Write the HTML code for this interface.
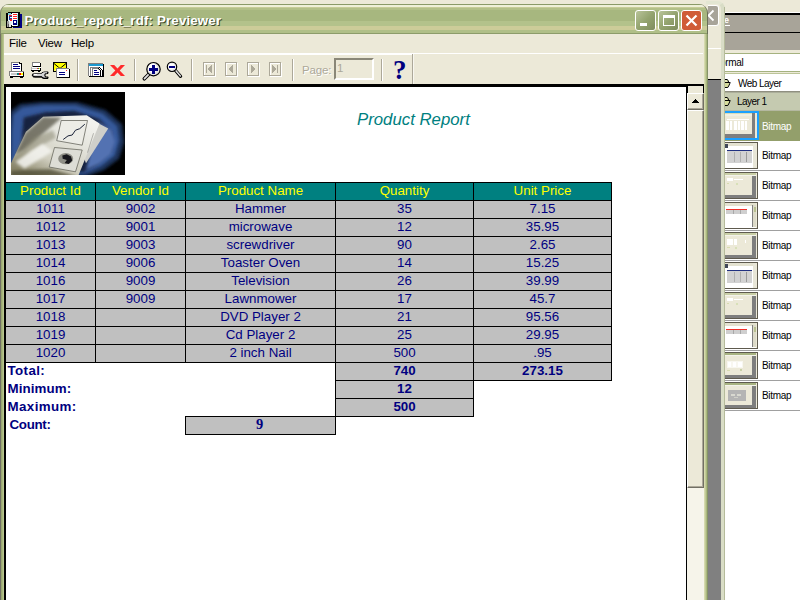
<!DOCTYPE html>
<html><head><meta charset="utf-8"><title>Product_report_rdf: Previewer</title>
<style>
*{box-sizing:border-box;margin:0;padding:0}
html,body{width:800px;height:600px;overflow:hidden;background:#ECE9D8;font-family:"Liberation Sans",sans-serif}
.a{position:absolute}
#stage{position:relative;width:800px;height:600px;overflow:hidden;background:#ECE9D8}
/* right panel (background app) */
#rp{left:725px;top:0;width:75px;height:600px;background:#fff}
#rp .t{position:absolute;font-size:10px;color:#000;white-space:nowrap;line-height:12px}
.bm{position:absolute;left:0;width:76px;height:30px;border-bottom:1px solid #A0A0A0;background:#fff}
.bm span{position:absolute;left:37px;top:9px;font-size:10px;letter-spacing:-0.3px;line-height:12px;color:#000}
.th{position:absolute;left:0;top:1px;width:33px;height:27px;background:#ECE9D8;border:1px solid #5E5A4E;border-left:none;overflow:hidden}
.th i{position:absolute;display:block}
/* main window */
#win{left:0;top:4px;width:708px;height:600px;background:#ECE9D8}
#tb{left:0;top:0;width:708px;height:30px;border-radius:9px 9px 0 0;border-right:1px solid #6B6F58;border-left:1px solid #7D8468;
background:linear-gradient(to bottom,#8A9A68 0,#8A9A68 1px,#EEF0D8 1px,#EEF0D8 3px,#C8CC98 3px,#C8CC98 4px,#B2C088 4px,#B2C088 6px,#A7B77F 6px,#A7B77F 17px,#B3C28B 17px,#B3C28B 22px,#CCCC99 22px,#CCCC99 26px,#B0BF88 26px,#B0BF88 29px,#8C9C6A 29px)}
#ttl{left:24.5px;top:9px;font-size:13.3px;font-weight:bold;color:#fff;white-space:nowrap;line-height:16px;text-shadow:1px 1px 0 #3E4A28;letter-spacing:0.16px}
.cb{position:absolute;top:6px;width:21px;height:21px;border:1px solid #fff;border-radius:3px;background:linear-gradient(135deg,#B9C49A 0,#94A46F 50%,#7F8C5E 100%)}
.menu{position:absolute;top:34px;font-size:11.5px;letter-spacing:-0.2px;line-height:14px;color:#000}
.sep{position:absolute;top:5px;width:2px;height:22px;border-left:1px solid #ACA899;border-right:1px solid #fff}
.nb{position:absolute;top:8px;width:12px;height:14px;border:1px solid #ACA899;box-shadow:1px 1px 0 #fff}
/* report */
#rep{left:6px;top:87px;width:680px;height:516px;background:#fff;overflow:hidden}
table{border-collapse:collapse;position:absolute;left:-1px;top:95px;font-size:13.33px;color:#000080;table-layout:fixed}
td,th{border:1px solid #000;height:18px;text-align:center;background:#C0C0C0;font-weight:normal;padding:0;line-height:15px;vertical-align:top;white-space:nowrap}
th{background:#008080;color:#FFFF00}
td.n{border:none;background:#fff}
td.b{font-weight:bold}
td.l{border:none;background:#fff;text-align:left;font-weight:bold;padding-left:2px;letter-spacing:0.4px}
</style></head><body>
<div id="stage">

<!-- background app right panel -->
<div class="a" id="rp">
  <div class="a" style="left:0;top:12px;width:76px;height:1px;background:#fff"></div>
  <div class="a" style="left:0;top:13px;width:76px;height:37px;background:#A8A499"></div>
  <div class="a" style="left:0;top:13px;width:76px;height:2px;background:#000"></div>
  <div class="a" style="left:0;top:32px;width:76px;height:1px;background:#000"></div>
  <div class="a" style="left:0;top:0;width:76px;height:12px;background:#ECE9D8"></div>
  <div class="t" style="left:-1px;top:14px;color:#fff;font-size:9px;font-weight:bold;line-height:13px">e</div><div class="a" style="left:0;top:25px;width:5px;height:1px;background:#fff"></div>
  <div class="a" style="left:0;top:50px;width:76px;height:24px;background:#ECE9D8"></div>
  <div class="a" style="left:0;top:53px;width:76px;height:19px;background:#fff;border-top:1px solid #A5B27F;border-bottom:1px solid #A5B27F"></div>
  <div class="a" style="left:0;top:73px;width:76px;height:1px;background:#BCC598"></div><div class="t" style="left:-5px;top:57px;letter-spacing:-0.3px">ormal</div>
  <div class="a" style="left:0;top:91px;width:76px;height:1px;background:#8F8F80"></div><div class="a" style="left:0;top:92px;width:76px;height:1px;background:#ABAE9A"></div>
  <div class="t" style="left:13px;top:78px;letter-spacing:-0.55px">Web Layer</div>
  <div class="a" style="left:0;top:93px;width:76px;height:18px;background:#C5CAB0"></div>
  <div class="t" style="left:12px;top:96px;letter-spacing:-0.55px">Layer 1</div>
  <!--EYE--><svg class="a" style="left:0;top:79px" width="7" height="10" viewBox="0 0 7 10"><path d="M0 0.5 L2 0.5 Q3.4 1 3.4 3.2 L4.6 3.4 L3.8 6 L2.6 8.4 L0 8.4 Z" fill="#D6DC9C"/><path d="M0 1.5 L2.4 1.5 L2.4 2.6 L0 2.6 Z" fill="#F0F0C8"/><path d="M0 0.5 L2 0.5 Q3.5 1 3.5 3 M0 3.5 L5.2 3.5 L4.2 6 L2.8 8.5 L0 8.5" stroke="#000" stroke-width="1" fill="none"/></svg><svg class="a" style="left:0;top:97px" width="7" height="10" viewBox="0 0 7 10"><path d="M0 0.5 L2 0.5 Q3.4 1 3.4 3.2 L4.6 3.4 L3.8 6 L2.6 8.4 L0 8.4 Z" fill="#D6DC9C"/><path d="M0 1.5 L2.4 1.5 L2.4 2.6 L0 2.6 Z" fill="#F0F0C8"/><path d="M0 0.5 L2 0.5 Q3.5 1 3.5 3 M0 3.5 L5.2 3.5 L4.2 6 L2.8 8.5 L0 8.5" stroke="#000" stroke-width="1" fill="none"/></svg><!--/EYE-->
  <!--TH-->
  <div class="bm" style="top:110px;background:#939F6B;height:31px;border-bottom:none;border-top:1px solid #B4B8A0"><div class="th" style="left:0;top:0;width:34px;height:29px;border:2px solid #1AA0FF;border-left:none;background:#ECE9D8"><i style="left:0px;top:0px;width:30px;height:1px;background:#D8DCB8"></i><i style="left:0px;top:1px;width:30px;height:2px;background:#F0EFE2"></i><i style="left:27px;top:0px;width:3px;height:25px;background:#7E7E7E"></i><i style="left:0px;top:21px;width:30px;height:4px;background:#7E7E7E"></i><i style="left:1px;top:8px;width:3px;height:9px;background:#fff"></i><i style="left:5px;top:8px;width:2px;height:9px;background:#fff"></i><i style="left:9px;top:8px;width:3px;height:9px;background:#fff"></i><i style="left:13px;top:8px;width:2px;height:9px;background:#fff"></i><i style="left:16px;top:8px;width:3px;height:9px;background:#fff"></i><i style="left:20px;top:8px;width:2px;height:9px;background:#fff"></i><i style="left:2px;top:6px;width:22px;height:1px;background:#fff"></i></div><span style="color:#fff;top:10px">Bitmap</span></div>
  <div class="bm" style="top:141px"><div class="th"><i style="left:0px;top:0px;width:31px;height:26px;background:#fff"></i><i style="left:0px;top:0px;width:31px;height:3px;background:#E4E2D0"></i><i style="left:0px;top:1px;width:3px;height:4px;background:#404858"></i><i style="left:2px;top:7px;width:25px;height:1px;background:#203080"></i><i style="left:2px;top:8px;width:25px;height:12px;background:#D2D2D2"></i><i style="left:9px;top:9px;width:1px;height:10px;background:#B0B0B0"></i><i style="left:15px;top:9px;width:1px;height:10px;background:#B0B0B0"></i><i style="left:21px;top:9px;width:1px;height:10px;background:#9A9A9A"></i><i style="left:28px;top:0px;width:3px;height:26px;background:#E8E6D8"></i></div><span>Bitmap</span></div>
  <div class="bm" style="top:171px"><div class="th"><i style="left:0px;top:0px;width:31px;height:2px;background:#C9CFA6"></i><i style="left:0px;top:2px;width:31px;height:1px;background:#F4F3EA"></i><i style="left:27px;top:3px;width:4px;height:23px;background:#7E7E7E"></i><i style="left:0px;top:22px;width:31px;height:4px;background:#7E7E7E"></i><i style="left:2px;top:5px;width:6px;height:3px;background:#fff"></i><i style="left:9px;top:6px;width:9px;height:1px;background:#fff"></i><i style="left:2px;top:10px;width:2px;height:1px;background:#D8DCB0"></i><i style="left:11px;top:10px;width:2px;height:2px;background:#D8E0B8"></i></div><span>Bitmap</span></div>
  <div class="bm" style="top:201px"><div class="th"><i style="left:0px;top:0px;width:31px;height:26px;background:#fff"></i><i style="left:0px;top:0px;width:31px;height:3px;background:#E4E2D0"></i><i style="left:1px;top:6px;width:21px;height:1px;background:#F03028"></i><i style="left:1px;top:7px;width:21px;height:4px;background:#CFCFCF"></i><i style="left:8px;top:7px;width:1px;height:4px;background:#A8A8A8"></i><i style="left:15px;top:7px;width:1px;height:4px;background:#A8A8A8"></i><i style="left:27px;top:2px;width:1px;height:22px;background:#808080"></i><i style="left:28px;top:2px;width:3px;height:22px;background:#DCDAC8"></i><i style="left:29px;top:4px;width:2px;height:5px;background:#B8C090"></i></div><span>Bitmap</span></div>
  <div class="bm" style="top:231px"><div class="th"><i style="left:0px;top:0px;width:31px;height:2px;background:#C9CFA6"></i><i style="left:0px;top:2px;width:31px;height:1px;background:#F4F3EA"></i><i style="left:27px;top:3px;width:4px;height:23px;background:#7E7E7E"></i><i style="left:0px;top:22px;width:31px;height:4px;background:#7E7E7E"></i><i style="left:2px;top:6px;width:6px;height:6px;background:#fff"></i><i style="left:9px;top:6px;width:3px;height:6px;background:#fff"></i><i style="left:20px;top:7px;width:1px;height:3px;background:#fff"></i><i style="left:2px;top:14px;width:3px;height:1px;background:#D8DCB0"></i><i style="left:10px;top:14px;width:2px;height:2px;background:#D8E0B8"></i></div><span>Bitmap</span></div>
  <div class="bm" style="top:261px"><div class="th"><i style="left:0px;top:0px;width:31px;height:26px;background:#fff"></i><i style="left:0px;top:0px;width:31px;height:3px;background:#E4E2D0"></i><i style="left:0px;top:1px;width:3px;height:4px;background:#404858"></i><i style="left:2px;top:7px;width:25px;height:1px;background:#203080"></i><i style="left:2px;top:8px;width:25px;height:12px;background:#D2D2D2"></i><i style="left:9px;top:9px;width:1px;height:10px;background:#B0B0B0"></i><i style="left:15px;top:9px;width:1px;height:10px;background:#B0B0B0"></i><i style="left:21px;top:9px;width:1px;height:10px;background:#9A9A9A"></i><i style="left:28px;top:0px;width:3px;height:26px;background:#E8E6D8"></i></div><span>Bitmap</span></div>
  <div class="bm" style="top:291px"><div class="th"><i style="left:0px;top:0px;width:31px;height:2px;background:#C9CFA6"></i><i style="left:0px;top:2px;width:31px;height:1px;background:#F4F3EA"></i><i style="left:27px;top:3px;width:4px;height:23px;background:#7E7E7E"></i><i style="left:0px;top:22px;width:31px;height:4px;background:#7E7E7E"></i><i style="left:2px;top:5px;width:6px;height:3px;background:#fff"></i><i style="left:9px;top:6px;width:9px;height:1px;background:#fff"></i><i style="left:2px;top:10px;width:2px;height:1px;background:#D8DCB0"></i><i style="left:11px;top:10px;width:2px;height:2px;background:#D8E0B8"></i></div><span>Bitmap</span></div>
  <div class="bm" style="top:321px"><div class="th"><i style="left:0px;top:0px;width:31px;height:26px;background:#fff"></i><i style="left:0px;top:0px;width:31px;height:3px;background:#E4E2D0"></i><i style="left:1px;top:6px;width:21px;height:1px;background:#F03028"></i><i style="left:1px;top:7px;width:21px;height:4px;background:#CFCFCF"></i><i style="left:8px;top:7px;width:1px;height:4px;background:#A8A8A8"></i><i style="left:15px;top:7px;width:1px;height:4px;background:#A8A8A8"></i><i style="left:27px;top:2px;width:1px;height:22px;background:#808080"></i><i style="left:28px;top:2px;width:3px;height:22px;background:#DCDAC8"></i><i style="left:29px;top:4px;width:2px;height:5px;background:#B8C090"></i></div><span>Bitmap</span></div>
  <div class="bm" style="top:351px"><div class="th"><i style="left:0px;top:0px;width:31px;height:2px;background:#A8B482"></i><i style="left:0px;top:2px;width:31px;height:1px;background:#F4F3EA"></i><i style="left:27px;top:3px;width:4px;height:23px;background:#7E7E7E"></i><i style="left:0px;top:22px;width:31px;height:4px;background:#7E7E7E"></i><i style="left:2px;top:8px;width:16px;height:7px;background:#F8F7F0"></i><i style="left:3px;top:9px;width:3px;height:5px;background:#fff"></i><i style="left:8px;top:9px;width:3px;height:5px;background:#fff"></i><i style="left:13px;top:9px;width:4px;height:5px;background:#fff"></i><i style="left:2px;top:17px;width:3px;height:1px;background:#D8DCB0"></i><i style="left:15px;top:16px;width:2px;height:2px;background:#C8D0A8"></i></div><span>Bitmap</span></div>
  <div class="bm" style="top:381px"><div class="th"><i style="left:0px;top:0px;width:31px;height:2px;background:#A8B482"></i><i style="left:0px;top:2px;width:31px;height:1px;background:#F4F3EA"></i><i style="left:27px;top:3px;width:4px;height:23px;background:#7E7E7E"></i><i style="left:0px;top:22px;width:31px;height:4px;background:#7E7E7E"></i><i style="left:3px;top:7px;width:18px;height:11px;background:#B4B4B4"></i><i style="left:6px;top:11px;width:4px;height:2px;background:#D8D8D0"></i><i style="left:12px;top:11px;width:4px;height:2px;background:#D8D8D0"></i><i style="left:9px;top:14px;width:4px;height:1px;background:#D0D0C8"></i></div><span>Bitmap</span></div>
  <!--/TH-->
</div>

<!-- background window sliver -->
<div class="a" style="left:706px;top:1px;width:19px;height:600px;background:#ECE9D8;border-radius:0 8px 0 0;border-right:4px solid #D9DDC6;border-top:3px solid #E3E6D2"></div>
<div class="a" style="left:707px;top:5px;width:12px;height:21px;background:#A8A499;border:1px solid #fff;border-left:none;border-radius:0 3px 3px 0"><svg class="a" style="left:0;top:0" width="11" height="19"><path d="M6.5 4.5 L1.5 9.5 L6.5 14.5" stroke="#fff" stroke-width="1.8" fill="none"/></svg></div>
<div class="a" style="left:707px;top:48px;width:14px;height:1px;background:#fff"></div>
<div class="a" style="left:707px;top:79px;width:14px;height:522px;background:#808080;border-top:1px solid #000"></div>

<div class="a" style="left:724px;top:7px;width:1px;height:593px;background:#B5BB9B"></div>
<!-- main window -->
<div class="a" id="win">
  <div class="a" id="tb"></div>
  <!--TI--><svg class="a" style="left:0;top:0" width="24" height="30" viewBox="0 4 24 30" shape-rendering="crispEdges"><rect x="13" y="14" width="9" height="14" fill="#000080"/><rect x="6" y="13" width="3" height="15" fill="#000"/><rect x="8" y="12" width="12" height="1" fill="#000"/><rect x="8" y="13" width="12" height="13" fill="#000"/><rect x="6" y="20" width="6" height="8" fill="#000"/><rect x="11" y="25" width="8" height="2" fill="#000"/><rect x="8" y="14" width="4" height="11" fill="#E8F4F8"/><rect x="12" y="13" width="6" height="13" fill="#fff"/><rect x="17" y="14" width="1" height="12" fill="#9ADCE8"/><rect x="8" y="13" width="3" height="2" fill="#7FD0E0"/><rect x="13" y="14" width="4" height="1" fill="#FF2020"/><rect x="13" y="16" width="4" height="1" fill="#FF2020"/><rect x="13" y="18" width="4" height="1" fill="#FF2020"/><rect x="9" y="15" width="3" height="1" fill="#FF2020"/><rect x="10" y="19" width="2" height="2" fill="#FF2020"/><rect x="9" y="16" width="3" height="1" fill="#2040A0"/><rect x="9" y="17" width="1" height="3" fill="#2040A0"/><rect x="10" y="18" width="2" height="1" fill="#2040A0"/><rect x="13" y="20" width="4" height="5" fill="#000080"/><rect x="14" y="21" width="2" height="2" fill="#fff"/><rect x="7" y="21" width="2" height="6" fill="#A0A0A0"/><rect x="9" y="22" width="2" height="5" fill="#E8E8E8"/><rect x="8" y="24" width="1" height="3" fill="#606060"/></svg><!--/TI-->
  <div class="a" id="ttl">Product_report_rdf: Previewer</div>
  <div class="cb" style="left:635px"><div class="a" style="left:4px;top:12px;width:7px;height:3px;background:#fff"></div></div>
  <div class="cb" style="left:658px"><div class="a" style="left:4px;top:4px;width:12px;height:11px;border:1px solid #fff;border-top-width:3px"></div></div>
  <div class="cb" style="left:681px;background:#D05C37"><svg class="a" style="left:0;top:0" width="19" height="19"><path d="M4.5 4.5 L14.5 14.5 M14.5 4.5 L4.5 14.5" stroke="#fff" stroke-width="2.2" fill="none"/></svg></div>
  <!-- frame -->
  <div class="a" style="left:0;top:30px;width:4px;height:570px;background:linear-gradient(to right,#706E64 0,#706E64 1px,#98A870 1px,#98A870 2px,#A9B77F 2px,#A9B77F 3px,#B9C58F 3px)"></div>
  <div class="a" style="left:704px;top:30px;width:4px;height:570px;background:linear-gradient(to right,#D6DAAE 0,#D6DAAE 1px,#C2CA98 1px,#C2CA98 2px,#AAB87E 2px,#AAB87E 3px,#86936A 3px)"></div>
</div>
<div class="menu" style="left:9px;top:36px">File</div>
<div class="menu" style="left:38px;top:36px">View</div>
<div class="menu" style="left:71px;top:36px">Help</div>
<div class="a" style="left:4px;top:53px;width:699px;height:1px;background:#fff"></div><div class="a" style="left:4px;top:54px;width:408px;height:1px;background:#fff"></div>

<!-- toolbar -->
<div class="a" id="tool" style="left:4px;top:54px;width:699px;height:30px">
  <div class="sep" style="left:73px"></div>
  <div class="sep" style="left:130px"></div>
  <div class="sep" style="left:187px"></div>
  <div class="sep" style="left:288px"></div>
  <div class="a" style="left:298px;top:9px;font-size:11.5px;letter-spacing:-0.15px;line-height:14px;color:#ACA899;text-shadow:1px 1px 0 #fff">Page:</div>
  <div class="a" style="left:330px;top:4px;width:40px;height:22px;border:2px solid;border-color:#8A8778 #fff #fff #8A8778"></div>
  <div class="a" style="left:333px;top:7px;font-size:11.5px;line-height:14px;color:#ACA899">1</div>
  <div class="sep" style="left:377px"></div>
  <div class="a" style="left:389px;top:2px;font-family:'Liberation Serif',serif;font-weight:bold;font-size:27px;line-height:28px;color:#000080">?</div>
  <div class="a" style="left:408px;top:0;width:2px;height:30px;border-left:1px solid #ACA899;border-right:1px solid #F8F7F0"></div>
</div>

<!--ICONS-->
<svg class="a" style="left:0;top:54px" width="420" height="30" viewBox="0 54 420 30" shape-rendering="crispEdges"><rect x="11" y="62" width="9" height="9" fill="#808080"/><rect x="12" y="63" width="9" height="8" fill="#fff"/><rect x="21" y="64" width="1" height="7" fill="#000"/><rect x="19" y="62" width="2" height="1" fill="#ECE9D8"/><rect x="19" y="63" width="1" height="1" fill="#000"/><rect x="20" y="63" width="1" height="1" fill="#000"/><rect x="20" y="62" width="1" height="1" fill="#ECE9D8"/><rect x="19" y="62" width="1" height="2" fill="#000"/><rect x="20" y="63" width="2" height="1" fill="#000"/><rect x="13" y="64" width="5" height="1" fill="#000080"/><rect x="13" y="66" width="7" height="1" fill="#000080"/><rect x="13" y="68" width="7" height="1" fill="#000080"/><rect x="9" y="71" width="15" height="5" fill="#808080"/><rect x="10" y="72" width="14" height="4" fill="#000"/><rect x="10" y="72" width="13" height="3" fill="#fff"/><rect x="11" y="73" width="12" height="2" fill="#C8C8C8"/><rect x="10" y="75" width="13" height="1" fill="#fff"/><rect x="17" y="73" width="2" height="2" fill="#008080"/><rect x="19" y="73" width="2" height="2" fill="#FF0000"/><rect x="21" y="73" width="2" height="2" fill="#FFFF00"/><rect x="10" y="76" width="14" height="1" fill="#000"/><rect x="10" y="77" width="3" height="1" fill="#000"/><rect x="20" y="77" width="3" height="1" fill="#000"/><rect x="32" y="62" width="8" height="5" fill="#808080"/><rect x="33" y="63" width="8" height="4" fill="#000"/><rect x="33" y="63" width="7" height="3" fill="#fff"/><rect x="31" y="67" width="10" height="3" fill="#fff"/><rect x="31" y="67" width="1" height="3" fill="#B0B0B0"/><rect x="32" y="68" width="8" height="1" fill="#C8C8C8"/><rect x="37" y="68" width="1" height="1" fill="#FF2020"/><rect x="38" y="68" width="1" height="1" fill="#008080"/><rect x="39" y="68" width="1" height="1" fill="#FFFF00"/><rect x="40" y="68" width="1" height="2" fill="#000"/><rect x="31" y="70" width="10" height="1" fill="#000"/><rect x="32" y="71" width="2" height="1" fill="#000"/><rect x="38" y="71" width="2" height="1" fill="#000"/><g shape-rendering="auto"><path d="M32.3 75.2 Q32.6 73.6 35 73.6 L41.5 73.6 Q42.6 72.1 44.5 72.1 L47.6 72.1 Q48.4 72.6 47.6 73.4 L45.4 73.6 Q44.2 75 45.4 76.8 L47.6 77 Q48.4 77.8 47.6 78.4 L44.8 78.4 Q42.6 78.2 41.5 76.8 L35 76.8 Q32.6 76.8 32.3 75.2 Z" fill="#D0D0D0" stroke="#000" stroke-width="1.15"/><path d="M33 76.9 L41.5 76.9 Q42.8 78.5 45 78.5 L47.8 78.5" stroke="#000" stroke-width="1" fill="none"/><path d="M33.5 74.2 L42 74.2 L43.5 72.8 L47 72.8" stroke="#fff" stroke-width="0.9" fill="none"/></g><rect x="34" y="74" width="3" height="1" fill="#fff"/><rect x="53" y="62" width="14" height="10" fill="#000"/><rect x="54" y="63" width="12" height="8" fill="#FFFF00"/><path d="M54 63.5 L60 68.5 L66 63.5" fill="none" stroke="#000" stroke-width="1" shape-rendering="auto"/><path d="M54.5 71 L58 67.5 M65.5 71 L62 67.5" fill="none" stroke="#E8E8C0" stroke-width="1" shape-rendering="auto"/><rect x="56" y="68" width="13" height="10" fill="#808080"/><rect x="57" y="69" width="13" height="9" fill="#000"/><rect x="57" y="69" width="12" height="8" fill="#fff"/><rect x="59" y="72" width="6" height="1" fill="#000080"/><rect x="59" y="74" width="6" height="1" fill="#000080"/><rect x="66" y="70" width="1" height="1" fill="#FF3030"/><rect x="88" y="63" width="15" height="13" fill="#808080"/><rect x="89" y="64" width="15" height="13" fill="#000"/><rect x="89" y="64" width="14" height="12" fill="#fff"/><rect x="89" y="64" width="14" height="2" fill="#1C9AD0"/><rect x="90" y="67" width="9" height="1" fill="#808080"/><rect x="90" y="67" width="1" height="9" fill="#808080"/><rect x="102" y="70" width="1" height="6" fill="#000"/><rect x="99" y="67" width="1" height="1" fill="#000"/><rect x="100" y="68" width="1" height="1" fill="#000"/><rect x="101" y="69" width="1" height="1" fill="#000"/><rect x="92" y="68" width="6" height="1" fill="#808080"/><rect x="92" y="68" width="1" height="8" fill="#808080"/><rect x="100" y="70" width="1" height="6" fill="#000"/><rect x="98" y="68" width="1" height="1" fill="#000"/><rect x="99" y="69" width="1" height="1" fill="#000"/><rect x="98" y="69" width="1" height="1" fill="#C0C0C0"/><rect x="94" y="70" width="3" height="1" fill="#000080"/><rect x="94" y="72" width="5" height="1" fill="#000080"/><rect x="94" y="74" width="5" height="1" fill="#000080"/><path d="M110 65 L114.2 65 L117.5 68.6 L120.8 65 L125 65 L119.7 70.5 L125 76 L120.8 76 L117.5 72.4 L114.2 76 L110 76 L115.3 70.5 Z" fill="#FF2A2A" shape-rendering="auto"/><g shape-rendering="auto"><path d="M148.8 74.2 L144.3 78.8" stroke="#000" stroke-width="3.6" stroke-linecap="round"/><path d="M148.8 74.2 L144.5 78.6" stroke="#E0E0E0" stroke-width="1.8" stroke-linecap="round"/><circle cx="153.5" cy="69.2" r="6.7" fill="#E4E4E4" stroke="#000" stroke-width="1.2"/><circle cx="152.6" cy="68.3" r="4.6" fill="#fff"/></g><rect x="149" y="68" width="9" height="3" fill="#000080"/><rect x="152" y="65" width="3" height="9" fill="#000080"/><g shape-rendering="auto"><path d="M175.5 70.5 L180.6 76.4" stroke="#000" stroke-width="3.2" stroke-linecap="round"/><path d="M175.5 70.3 L180.4 76" stroke="#E0E0E0" stroke-width="1.5" stroke-linecap="round"/><circle cx="172" cy="66.8" r="4.7" fill="#E8E8E8" stroke="#000" stroke-width="1.2"/><circle cx="171.6" cy="66.4" r="3" fill="#fff"/></g><rect x="169" y="66" width="6" height="2" fill="#000080"/><rect x="204" y="63" width="12" height="14" fill="#fff"/><rect x="203" y="62" width="12" height="14" fill="#ACA899"/><rect x="204" y="63" width="10" height="12" fill="#fff"/><rect x="205" y="64" width="9" height="11" fill="#ECE9D8"/><rect x="206" y="65" width="1" height="8" fill="#ACA899"/><rect x="208" y="68" width="1" height="2" fill="#ACA899"/><rect x="209" y="67" width="1" height="4" fill="#ACA899"/><rect x="210" y="66" width="1" height="6" fill="#ACA899"/><rect x="211" y="65" width="1" height="8" fill="#ACA899"/><rect x="226" y="63" width="12" height="14" fill="#fff"/><rect x="225" y="62" width="12" height="14" fill="#ACA899"/><rect x="226" y="63" width="10" height="12" fill="#fff"/><rect x="227" y="64" width="9" height="11" fill="#ECE9D8"/><rect x="229" y="68" width="1" height="2" fill="#ACA899"/><rect x="230" y="67" width="1" height="4" fill="#ACA899"/><rect x="231" y="66" width="1" height="6" fill="#ACA899"/><rect x="232" y="65" width="1" height="8" fill="#ACA899"/><rect x="248" y="63" width="12" height="14" fill="#fff"/><rect x="247" y="62" width="12" height="14" fill="#ACA899"/><rect x="248" y="63" width="10" height="12" fill="#fff"/><rect x="249" y="64" width="9" height="11" fill="#ECE9D8"/><rect x="254" y="68" width="1" height="2" fill="#ACA899"/><rect x="253" y="67" width="1" height="4" fill="#ACA899"/><rect x="252" y="66" width="1" height="6" fill="#ACA899"/><rect x="251" y="65" width="1" height="8" fill="#ACA899"/><rect x="270" y="63" width="12" height="14" fill="#fff"/><rect x="269" y="62" width="12" height="14" fill="#ACA899"/><rect x="270" y="63" width="10" height="12" fill="#fff"/><rect x="271" y="64" width="9" height="11" fill="#ECE9D8"/><rect x="275" y="68" width="1" height="2" fill="#ACA899"/><rect x="274" y="67" width="1" height="4" fill="#ACA899"/><rect x="273" y="66" width="1" height="6" fill="#ACA899"/><rect x="272" y="65" width="1" height="8" fill="#ACA899"/><rect x="277" y="65" width="1" height="8" fill="#ACA899"/></svg>
<!--/ICONS-->

<!-- preview frame -->
<div class="a" style="left:4px;top:84px;width:700px;height:2px;background:#000"></div><div class="a" style="left:4px;top:86px;width:683px;height:1px;background:#000"></div>
<div class="a" style="left:4px;top:84px;width:2px;height:516px;background:#000"></div>
<div class="a" id="rep">
  <!--PIC--><svg class="a" style="left:5px;top:5px" width="114" height="83" viewBox="0 0 114 83"><defs><filter id="b1" x="-20%" y="-20%" width="140%" height="140%"><feGaussianBlur stdDeviation="1.4"/></filter><filter id="b2" x="-20%" y="-20%" width="140%" height="140%"><feGaussianBlur stdDeviation="0.7"/></filter><linearGradient id="pg" x1="0.8" y1="0.05" x2="0.15" y2="0.95"><stop offset="0" stop-color="#F2F2EE"/><stop offset="0.35" stop-color="#E4E4DC"/><stop offset="0.7" stop-color="#CFCDBE"/><stop offset="1" stop-color="#8A866A"/></linearGradient><clipPath id="pc"><rect width="114" height="83"/></clipPath></defs><rect width="114" height="83" fill="#000"/><g clip-path="url(#pc)"><polygon filter="url(#b1)" fill="#1B3058" points="0.0,18.7 9.0,12.0 30.0,10.0 66.0,10.0 94.5,18.0 111.0,32.2 113.2,50.2 108.0,66.7 93.0,78.0 75.0,84.7 -3.0,84.7 -3.0,41.2"/><polygon filter="url(#b1)" fill="#36599A" points="2.2,22.5 11.2,15.4 31.5,13.0 64.5,13.3 91.5,21.4 106.2,34.0 108.3,48.7 103.8,63.4 90.3,73.9 73.5,81.7 0.0,82.5 0.7,41.2"/><polygon filter="url(#b1)" fill="#16233F" points="12.7,25.5 34.5,20.2 63.0,18.7 88.5,27.0 100.5,39.7 100.5,59.2 87.0,72.0 72.0,80.2 12.0,80.2 11.2,41.2"/><polygon filter="url(#b1)" fill="#5272B2" points="84.7,28.5 100.5,37.5 104.2,49.5 100.5,62.2 88.5,72.0 75.0,78.0 81.0,53.2 93.0,39.7"/><polygon filter="url(#b2)" fill="#CFCFCA" points="75.0,24.7 97.2,36.4 75.0,71.2 69.0,56.2"/><polygon filter="url(#b2)" fill="url(#pg)" points="0.0,71.2 15.0,39.7 32.2,24.7 75.7,23.2 88.5,31.5 67.5,83.2 0.0,83.2"/><polygon filter="url(#b1)" fill="#5E5D50" opacity="0.8" points="14.2,41.2 32.2,25.0 51.0,25.5 36.0,38.2 13.5,57.7 4.5,62.2"/><polygon filter="url(#b1)" fill="#8A8872" opacity="0.55" points="3.0,66.7 22.5,45.7 42.0,38.2 45.0,45.7 19.5,59.2 1.5,77.2"/><polygon filter="url(#b1)" fill="#4E4B34" opacity="0.75" points="0.0,78.7 39.0,77.2 67.5,84.7 0.0,84.7"/><polygon filter="url(#b1)" fill="#F4F4F0" opacity="0.85" points="4.5,69.7 31.5,51.7 42.0,59.2 13.5,76.5"/><polygon fill="#ECECE6" stroke="#55554C" stroke-width="0.7" points="50.2,28.5 76.5,28.5 71.2,53.2 45.7,48.7"/><polyline fill="none" stroke="#1A2238" stroke-width="1" points="52.2,47.5 57.0,43.9 61.2,43.0 64.5,38.2 68.7,36.7 73.8,32.2"/><polygon fill="#DDDDD6" stroke="#5A5A50" stroke-width="0.7" points="43.5,55.5 71.2,58.0 64.5,79.8 38.2,75.0"/><ellipse cx="54.7" cy="66.7" rx="7.5" ry="5.6" fill="#8E8E86" filter="url(#b2)"/><polygon fill="#15151A" filter="url(#b2)" points="51.3,63.4 55.8,62.2 60.0,64.5 61.2,68.5 57.7,72.0 53.7,70.9 55.8,67.9 51.7,66.7"/><polyline fill="none" stroke="#8C8C88" stroke-width="0.6" points="82.5,41.2 76.5,60.7"/></g></svg><!--/PIC-->
  <div class="a" style="left:351px;top:23px;font-size:16.8px;font-style:italic;color:#008080;line-height:20px;white-space:nowrap">Product Report</div>
  <table>
  <colgroup><col style="width:90px"><col style="width:90px"><col style="width:150px"><col style="width:138px"><col style="width:138px"></colgroup>
  <tr><th>Product Id</th><th>Vendor Id</th><th>Product Name</th><th>Quantity</th><th>Unit Price</th></tr>
  <tr><td>1011</td><td>9002</td><td>Hammer</td><td>35</td><td>7.15</td></tr>
  <tr><td>1012</td><td>9001</td><td>microwave</td><td>12</td><td>35.95</td></tr>
  <tr><td>1013</td><td>9003</td><td>screwdriver</td><td>90</td><td>2.65</td></tr>
  <tr><td>1014</td><td>9006</td><td>Toaster Oven</td><td>14</td><td>15.25</td></tr>
  <tr><td>1016</td><td>9009</td><td>Television</td><td>26</td><td>39.99</td></tr>
  <tr><td>1017</td><td>9009</td><td>Lawnmower</td><td>17</td><td>45.7</td></tr>
  <tr><td>1018</td><td></td><td>DVD Player 2</td><td>21</td><td>95.56</td></tr>
  <tr><td>1019</td><td></td><td>Cd Player 2</td><td>25</td><td>29.95</td></tr>
  <tr><td>1020</td><td></td><td>2 inch Nail</td><td>500</td><td>.95</td></tr>
  <tr><td class="l" colspan="3">Total:</td><td class="b">740</td><td class="b">273.15</td></tr>
  <tr><td class="l" colspan="3" style="letter-spacing:0.1px">Minimum:</td><td class="b">12</td><td class="n"></td></tr>
  <tr><td class="l" colspan="3">Maximum:</td><td class="b">500</td><td class="n"></td></tr>
  <tr><td class="l" colspan="2" style="padding-left:4px;letter-spacing:-0.3px">Count:</td><td class="b" style="font-family:'Liberation Serif',serif;font-size:14.5px;padding-right:2px">9</td><td class="n"></td><td class="n"></td></tr>
  </table>
</div>

<!-- scrollbar -->
<div class="a" style="left:686px;top:86px;width:1px;height:514px;background:#000"></div>
<div class="a" style="left:687px;top:86px;width:17px;height:514px;background:#F6F4EA"></div>
<div class="a" style="left:687px;top:86px;width:17px;height:7px;background:#ECE9D8;border-left:1px solid #000;border-right:1px solid #000"></div>
<div class="a" style="left:687px;top:93px;width:17px;height:17px;background:#ECE9D8;border:1px solid;border-color:#fff #716F64 #716F64 #fff;box-shadow:inset -1px -1px 0 #ACA899"></div>
<svg class="a" style="left:692px;top:99px" width="7" height="4" shape-rendering="crispEdges"><rect x="3" y="0" width="1" height="1"/><rect x="2" y="1" width="3" height="1"/><rect x="1" y="2" width="5" height="1"/><rect x="0" y="3" width="7" height="1"/></svg>
<div class="a" style="left:687px;top:110px;width:17px;height:378px;background:#ECE9D8;border:1px solid;border-color:#fff #716F64 #716F64 #fff;box-shadow:inset -1px -1px 0 #ACA899"></div>

</div>
</body></html>
